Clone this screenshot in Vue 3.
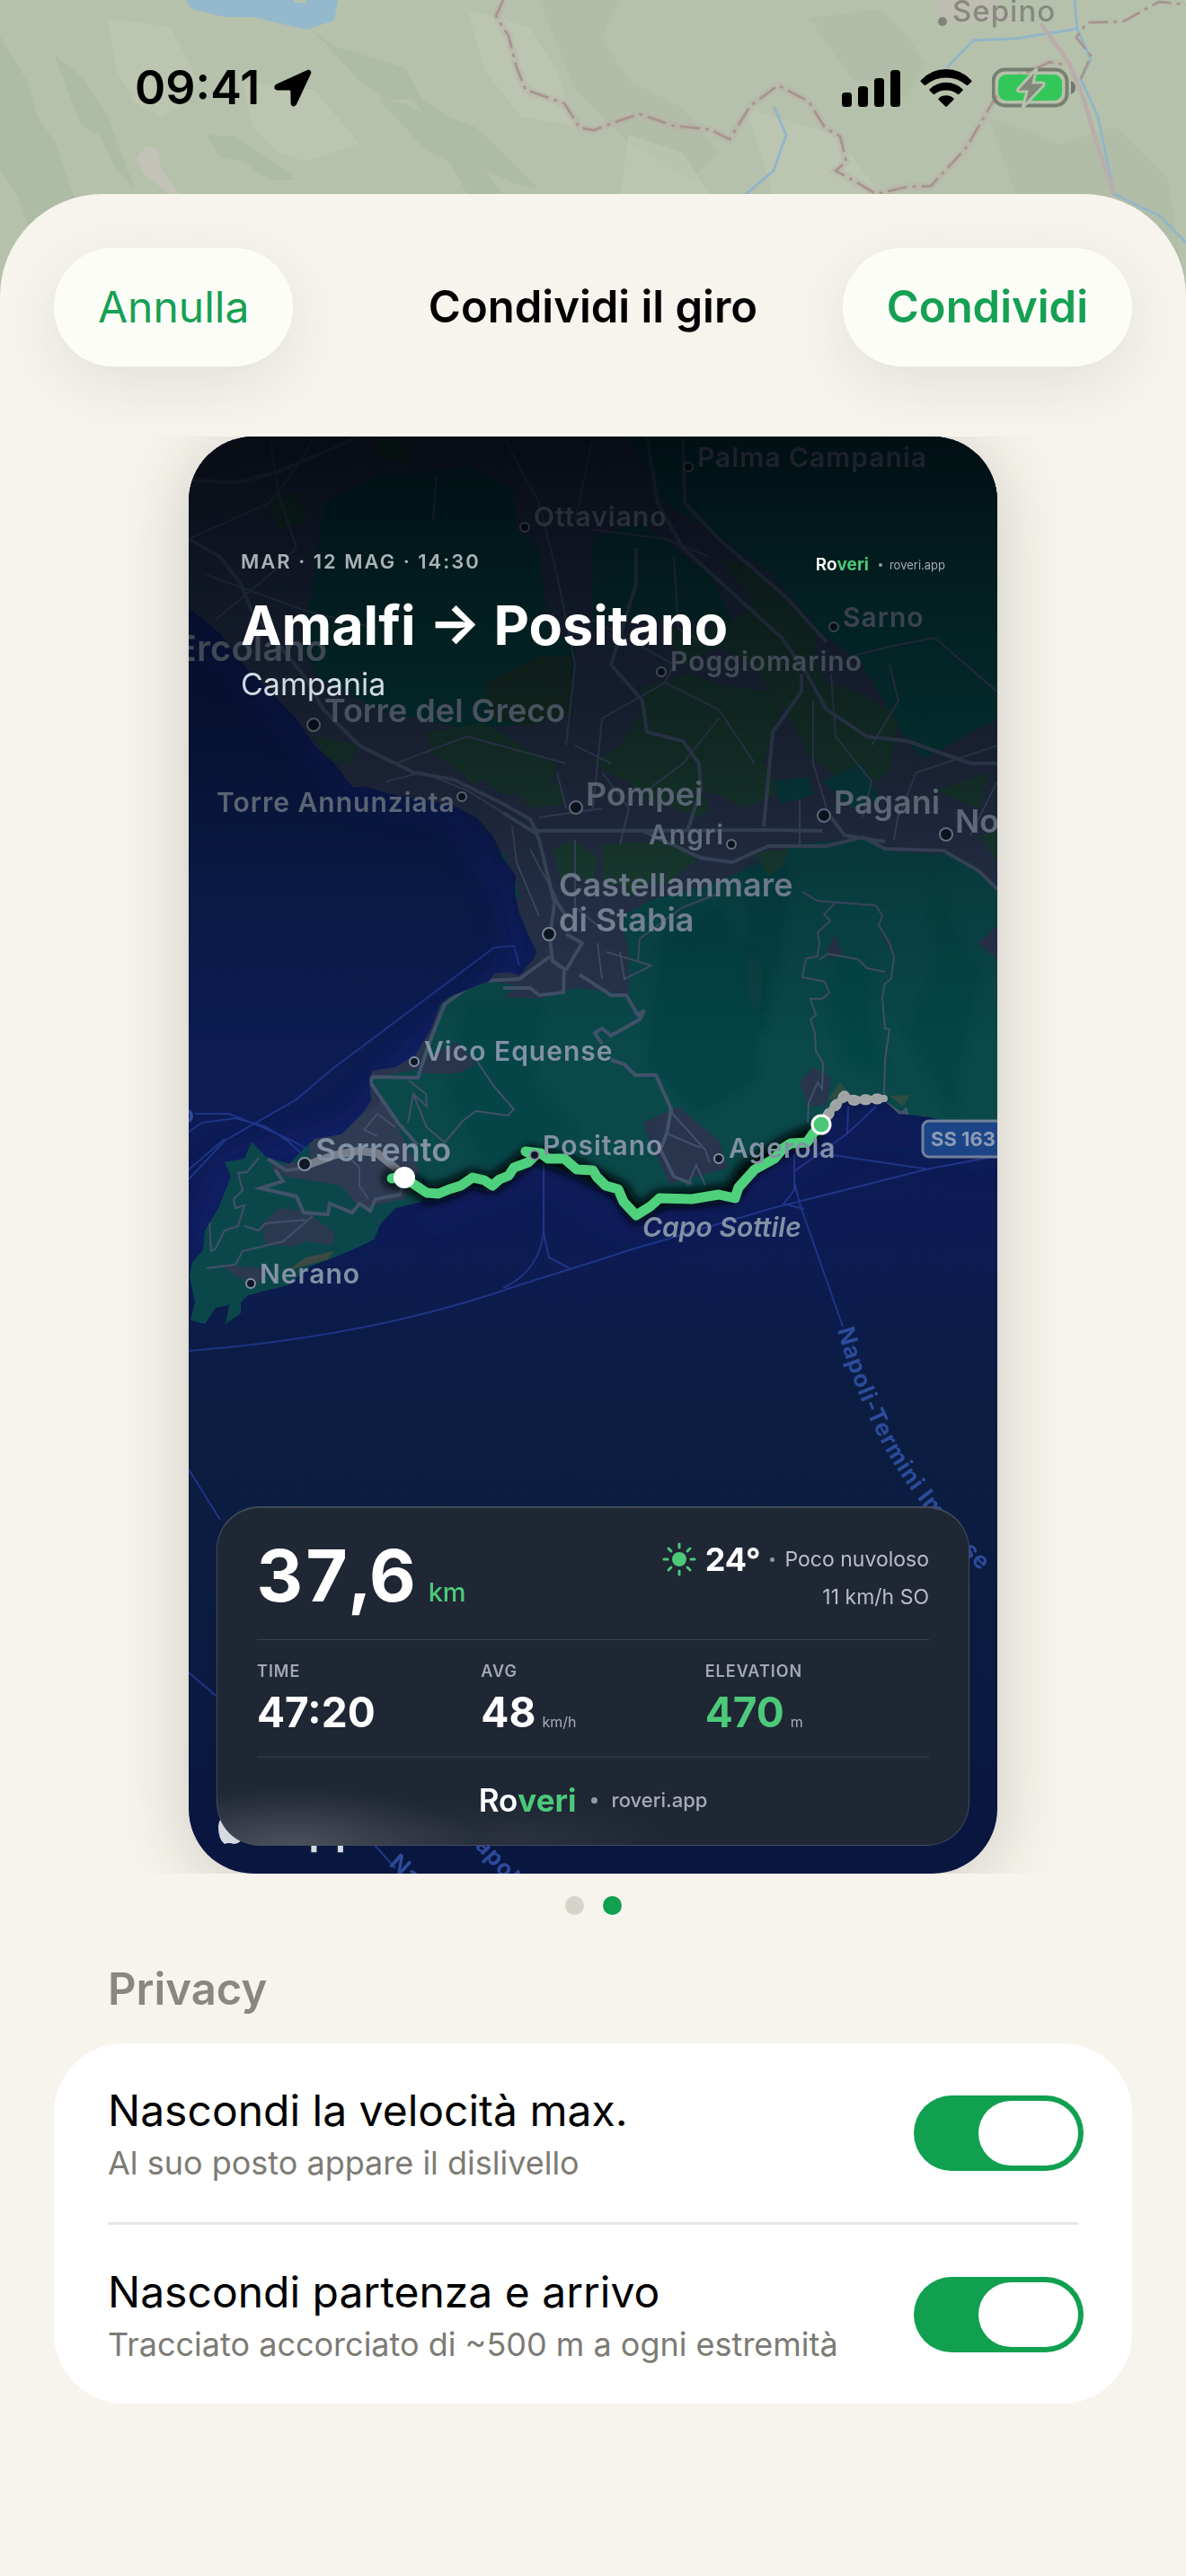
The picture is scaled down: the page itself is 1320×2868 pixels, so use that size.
<script setup>
import { reactive } from 'vue'

const privacy = reactive([
  { id: 'hide-speed', title: 'Nascondi la velocità max.', hint: 'Al suo posto appare il dislivello', on: true },
  { id: 'hide-ends', title: 'Nascondi partenza e arrivo', hint: 'Tracciato accorciato di ~500 m a ogni estremità', on: true },
])

const stats = [
  { label: 'TIME', value: '47:20', unit: '' },
  { label: 'AVG', value: '48', unit: 'km/h' },
  { label: 'ELEVATION', value: '470', unit: 'm', accent: true },
]

const towns = [
  { name: 'Palma Campania', x: 776, y: 520, dx: 766, dy: 520, size: 's' },
  { name: 'Ottaviano', x: 594, y: 586, dx: 584, dy: 587, size: 's' },
  { name: 'Sarno', x: 938, y: 698, dx: 928, dy: 698, size: 's' },
  { name: 'Poggiomarino', x: 746, y: 747, dx: 736, dy: 748, size: 's' },
  { name: 'Torre del Greco', x: 361, y: 804, dx: 349, dy: 807, size: 'm' },
  { name: 'Torre Annunziata', x: 241, y: 904, dx: 514, dy: 887, size: 's' },
  { name: 'Pompei', x: 652, y: 897, dx: 641, dy: 899, size: 'm' },
  { name: 'Pagani', x: 928, y: 906, dx: 917, dy: 908, size: 'm' },
  { name: 'No', x: 1063, y: 927, dx: 1053, dy: 929, size: 'm' },
  { name: 'Angri', x: 722, y: 940, dx: 814, dy: 940, size: 's' },
  { name: 'Castellammare', x: 622, y: 998, dx: 611, dy: 1040, size: 'm' },
  { name: 'di Stabia', x: 622, y: 1037, size: 'm' },
  { name: 'Vico Equense', x: 472, y: 1181, dx: 461, dy: 1182, size: 's' },
  { name: 'Positano', x: 604, y: 1286, size: 's' },
  { name: 'Agerola', x: 811, y: 1289, dx: 800, dy: 1290, size: 's' },
  { name: 'Nerano', x: 289, y: 1429, dx: 279, dy: 1429, size: 's' },
]
</script>

<template>
  <div class="screen">
    <svg class="backdrop" viewBox="0 0 1320 440" aria-hidden="true">
      <rect width="1320" height="440" fill="#b6c1ab" />
      <g fill="#a9b59f" opacity=".45">
        <path d="M0 40L30 90 42 130 62 160 90 240 110 330 80 400 50 300 20 220 0 190Z" />
        <path d="M60 60L90 85 120 130 135 170 150 210 130 190 110 150 90 140Z" />
        <path d="M345 30L372 52 400 60 450 75 470 110 500 130 530 142 560 170 600 210 575 205 540 190 510 160 480 140 460 110 430 112 400 90Z" />
        <path d="M230 150L260 152 290 170 330 200 300 200 270 180 245 175Z" />
        <path d="M420 110L450 115 480 130 510 155 540 190 560 216 520 216 500 180 470 165 450 140Z" />
        <path d="M600 0L690 0 670 40 700 90 760 120 800 170 770 200 700 160 640 100 620 50Z" opacity=".6" />
        <path d="M900 20L980 10 1010 40 1030 70 1010 110 980 90 950 90Z" opacity=".6" />
        <path d="M1100 130L1180 160 1240 140 1300 200 1320 330 1230 260 1130 216Z" opacity=".6" />
      </g>
      <g fill="#c0cab5" opacity=".5">
        <path d="M120 20L190 30 220 90 200 120 180 130 150 115 130 80Z" />
        <path d="M270 90L350 100 400 160 340 180 310 170 280 140Z" />
        <path d="M520 10L590 30 620 80 640 140 580 130 540 80Z" />
        <path d="M830 120L930 150 980 216 860 216Z" />
        <path d="M700 150L760 170 790 216 690 216Z" />
      </g>
      <path d="M207 0L213 10 250 19 281 19 341 33 372 23 376 0 340 0 341 3 328 3 327 0Z" fill="#95b9cc" />
      <path d="M152 175L163 163 175 165 180 190 207 226 190 216 160 195Z" fill="#c3c2b9" />
      <path d="M1046 0L1044 18 1060 26 1130 24 1110 0Z" fill="#bfbcb3" />
      <g fill="none" stroke="#92b5c8" stroke-width="3">
        <path d="M1196 0L1199 32 1130 43 1083 45 1054 75" />
        <path d="M1199 32L1214 66 1203 88 1222 130 1240 216 1290 240 1320 270" />
        <path d="M861 118L875 150 861 190 828 218" />
      </g>
      <path d="M1158 26L1190 70 1206 110 1224 170 1240 216" fill="none" stroke="#b9aeac" stroke-width="5" />
      <g fill="none">
        <path d="M560 0L552 18 566 40 575 75 585 100 628 115 645 142 661 145 690 134 712 127 750 140 790 144 812 155 835 118 866 95 900 113 918 142 935 152 942 180 930 190 952 202 975 216 1010 208 1036 207 1075 165 1103 117 1120 90 1150 78 1168 69 1185 72" stroke="#b9aca6" stroke-width="9" opacity=".35" />
        <path d="M560 0L552 18 566 40 575 75 585 100 628 115 645 142 661 145 690 134 712 127 750 140 790 144 812 155 835 118 866 95 900 113 918 142 935 152 942 180 930 190 952 202 975 216 1010 208 1036 207 1075 165 1103 117 1120 90 1150 78 1168 69 1185 72" stroke="#a8958f" stroke-width="3" stroke-dasharray="22 6 4 6" />
        <path d="M1203 88L1214 62 1198 42 1210 25 1250 24 1290 2 1320 5" stroke="#a8958f" stroke-width="3" stroke-dasharray="22 6 4 6" />
      </g>
      <circle cx="1049" cy="24" r="5" fill="#7f857a" />
      <text x="1060" y="24" class="sepino">Sepino</text>
    </svg>

    <header class="status">
      <div class="clock">
        <span>09:41</span>
        <svg width="42" height="42" viewBox="0 0 42 42" aria-hidden="true">
          <path d="M36.500 1.200L3 16.500C-1 18.500-.2 23.300 3.500 23.400L17.200 23.600Q18.400 23.600 18.400 24.800L18.600 38C18.700 42 23.300 42.800 25.200 38.800L40.800 5.500C42.300 2 39.800-.3 36.500 1.200Z" fill="#000" />
        </svg>
      </div>
      <div class="signals">
        <svg width="65" height="41" viewBox="0 0 65 41" aria-hidden="true">
          <rect x="0" y="25" width="11" height="16" rx="3.500" /><rect x="18" y="18" width="11" height="23" rx="3.500" />
          <rect x="36" y="9" width="11" height="32" rx="3.500" /><rect x="54" y="0" width="11" height="41" rx="3.500" />
        </svg>
        <svg width="58" height="42" viewBox="0 0 58 42" aria-hidden="true">
          <path d="M.8 12.400Q12.500 0 29 0T57.200 12.400Q57.800 13.200 57.200 13.900L53.300 17.800Q52.500 18.400 51.700 17.800Q42 9.400 29 9.400T6.300 17.800Q5.500 18.400 4.700 17.800L.8 13.900Q.2 13.200.8 12.400Z" />
          <path d="M10.600 22.300Q18.500 14.800 29 14.800T47.400 22.300Q48 23.100 47.400 23.800L43.400 27.800Q42.600 28.500 41.800 27.800Q36.300 23.400 29 23.400T16.200 27.800Q15.400 28.500 14.600 27.800L10.600 23.800Q10 23.100 10.600 22.300Z" />
          <path d="M20.600 32.400Q24 29.300 29 29.300T37.400 32.400Q38 33.200 37.400 33.900L29.800 41.400Q29 42.100 28.200 41.400L20.600 33.900Q20 33.200 20.600 32.400Z" />
        </svg>
        <svg width="94" height="46" viewBox="0 0 94 46" aria-hidden="true">
          <rect x="1.500" y="2.500" width="82" height="40" rx="13" fill="none" stroke="#767f70" stroke-width="4" />
          <path d="M88 15Q93 17 93 22.500T88 30Z" fill="#6f776a" />
          <rect x="7" y="8" width="71" height="29" rx="9" fill="#33c759" />
          <path d="M50 1L29 24Q27 27 31 27H39L34 45 57 21Q60 17 55 17H46Z" fill="#80887a" stroke="#b6c1ab" stroke-width="3" />
        </svg>
      </div>
    </header>

    <main class="sheet">
      <div class="toolbar">
        <button type="button" class="pill">Annulla</button>
        <h1>Condividi il giro</h1>
        <button type="button" class="pill strong">Condividi</button>
      </div>

      <div class="carousel">
        <article class="card">
          <svg class="map" viewBox="210 486 900 1600" preserveAspectRatio="xMidYMid slice" aria-hidden="true">
            <defs>
              <linearGradient id="sea" x1="0" y1="0" x2="0" y2="1">
                <stop offset="0" stop-color="#0e1f55" /><stop offset=".3" stop-color="#0c1e50" />
                <stop offset=".55" stop-color="#0d1b55" /><stop offset=".68" stop-color="#0b1d40" />
                <stop offset=".78" stop-color="#0b1c40" /><stop offset="1" stop-color="#091640" />
              </linearGradient>
              <linearGradient id="shade" x1="0" y1="0" x2="0" y2="1">
                <stop offset="0" stop-color="#000308" stop-opacity=".82" /><stop offset=".1" stop-color="#000308" stop-opacity=".6" />
                <stop offset=".22" stop-color="#000308" stop-opacity=".4" /><stop offset=".32" stop-color="#000308" stop-opacity=".15" />
                <stop offset=".42" stop-color="#000308" stop-opacity="0" />
              </linearGradient>
              <filter id="soft" x="-20%" y="-20%" width="140%" height="140%"><feGaussianBlur stdDeviation="14" /></filter>
              <filter id="glow" x="-10%" y="-50%" width="120%" height="200%"><feGaussianBlur stdDeviation="4" /></filter>
              <clipPath id="landclip">
                <path d="M210 486V677L245 705 275 745 330 800 350 830 372 850 393 877 405 875 430 883 505 897 530 910 548 930 560 955 574 975 573 990 577 1015 590 1045 597 1060 592 1070 578 1086 566 1082 550 1084 545 1092 500 1110 490 1118 480 1145 462 1175 440 1188 415 1192 411 1200 413 1225 405 1238 380 1263 350 1268 335 1282 322 1296 296 1288 280 1271 272 1290 250 1294 257 1310 243 1345 228 1370 226 1392 214 1405 211 1420 217 1450 212 1470 228 1474 240 1456 255 1453 251 1474 268 1462 268 1450 276 1442 320 1431 345 1410 372 1400 398 1389 416 1380 424 1362 440 1345 470 1338 490 1326 522 1312 550 1320 582 1290 602 1284 640 1300 665 1298 690 1325 708 1350 735 1335 770 1334 815 1328 830 1305 860 1282 880 1272 905 1262 925 1240 945 1224 985 1226 1000 1240 1030 1243 1110 1262V486Z" />
              </clipPath>
            </defs>
            <rect x="210" y="486" width="900" height="1600" fill="url(#sea)" />
            <g filter="url(#soft)" fill="none" stroke="#162174" stroke-width="26" opacity=".6">
              <path d="M210 690L330 815 390 880 505 905 560 985 580 1060 540 1110 480 1155 440 1200 390 1260 250 1300 215 1400" />
              <path d="M470 1360L600 1310 700 1375 850 1320 960 1255 1110 1290" opacity=".4" />
            </g>
            <g clip-path="url(#landclip)">
              <rect x="210" y="486" width="900" height="800" fill="#29344d" />
              <rect x="210" y="1260" width="260" height="230" fill="#0b474a" />
              <path d="M300 1300L345 1290 345 1270 420 1230 440 1190 480 1280 450 1335 400 1345 380 1320 320 1310Z" fill="#2f3b52" />
              <path d="M305 1345L345 1348 370 1385 365 1372 325 1385 290 1365 310 1345ZM245 1408L300 1412 285 1432 262 1420Z" fill="#2b3a50" />
              <path d="M345 1352L372 1372 370 1386 340 1382 325 1388 296 1386 292 1368 320 1362Z" fill="#2b3a50" />
              <path d="M318 1416L340 1400 372 1393 365 1402 330 1412Z" fill="#3b4a43" />
              <!-- mountains of the peninsula -->
              <path d="M500 1110L545 1092 590 1100 630 1105 640 1090 700 1110 700 1060 690 1020 730 1000 790 985 860 955 880 940 960 934 990 948 1060 952 1095 975 1110 985V1265H1030L985 1226 945 1222 905 1262 830 1300 815 1330 710 1352 665 1298 582 1290 550 1320 480 1330 440 1250 411 1200 470 1190 490 1120Z" fill="#0a484a" />
              <g filter="url(#glow)">
                <path d="M740 1030L800 1010 850 1080 840 1200 780 1240 720 1180Z" fill="#0a4144" opacity=".6" />
                <path d="M830 960L880 960 870 1060 850 1150 830 1100Z" fill="#093c40" opacity=".5" />
                <path d="M930 1060L970 1080 965 1140 990 1200 940 1180 925 1120Z" fill="#0a4245" opacity=".6" />
                <path d="M1040 980L1070 1050 1090 1080 1075 1150 1060 1240 1010 1150 1040 1090Z" fill="#0a4144" opacity=".5" />
                <path d="M520 1120L600 1120 590 1200 640 1260 540 1300 500 1220Z" fill="#0a4247" opacity=".5" />
              </g>
              <path d="M470 1180L510 1160 530 1185 510 1195 470 1195ZM715 1250L755 1232 800 1270 810 1300 745 1318ZM890 1205L905 1188 925 1200 920 1230 900 1232ZM560 1110L620 1070 690 1060 695 1105 640 1100 600 1112ZM920 1060L930 1040 938 1062 925 1068ZM980 1040L990 1045 992 1058ZM1088 1050L1110 1030V1068Z" fill="#29344d" />
              <path d="M920 1225L935 1205 950 1222ZM990 1220L1013 1219 1005 1232Z" fill="#2c4c44" />
              <!-- Vesuvius and the eastern hills -->
              <path d="M360 560L420 530 520 520 572 545 575 590 600 610 610 700 640 720 638 790 600 805 520 812 420 790 355 755 335 720 350 640Z" fill="#06403f" />
              <path d="M540 760L600 730 636 730 636 795 590 808 545 800Z" fill="#1c3a2e" />
              <path d="M700 486H1110V860L1060 890 1000 810 960 740 910 700 860 640 790 590 740 560Z" fill="#084745" />
              <path d="M660 600L710 580 790 640 820 700 760 690 690 690 660 700Z" fill="#08413f" />
              <path d="M1000 860L1110 800 1110 870 1050 900Z" fill="#29344d" />
              <!-- farmland -->
              <g fill="#1d4236">
                <path d="M800 620L850 640 880 672 910 700 905 730 920 760 965 775 1000 800 995 830 990 860 940 890 925 860 900 840 880 800 860 770 830 735 800 720 760 740 740 700 780 702 820 690 840 670Z" />
                <path d="M715 765L770 750 800 762 860 770 870 790 860 815 850 850 870 880 830 900 800 885 780 880 790 900 780 910 720 890 700 870 680 862 660 850 690 830 710 800Z" />
                <path d="M670 940L750 935 780 955 740 985 720 982 700 1000 690 985 670 985ZM840 950L880 945 870 965 855 975Z" />
                <path d="M475 815L540 805 580 830 620 850 610 880 560 885 540 870 520 860 480 840ZM350 820L400 830 390 850 365 845ZM500 850L540 860 530 875ZM575 880L620 870 630 895 590 900ZM615 945L640 935 665 955 660 985 640 972 625 985Z" />
                <path d="M300 560L330 545 340 580 310 590ZM420 486L460 495 450 515 415 505ZM1040 880L1100 860 1090 900ZM1090 930L1110 925V960Z" />
              </g>
              <path d="M550 950L560 948 580 1000 573 1000ZM860 870L900 865 905 885 870 895ZM915 870L960 850 980 890 950 900Z" fill="#0a474a" />
              <!-- minor roads -->
              <g fill="none" stroke="#43506a" stroke-width="2">
                <path d="M210 600L300 560 330 520 350 486M230 640L340 680 420 700M240 690L300 640 330 610 310 550 300 486M486 530L482 580M640 580L660 486M560 486L600 560 620 640 640 740 630 830" />
                <path d="M660 590L740 600 790 620M750 620L755 700 790 720M660 690L750 740 740 760 670 800 660 900M740 760L800 790 840 850M925 750L930 820 970 870 960 910M905 780L905 850 920 900M800 800L760 850 720 880" />
                <path d="M1110 770L1040 710 990 720 950 730M970 830L1000 780 990 740M1000 910L1020 860 1110 830M1080 930L1110 870M670 860L700 900 690 940M890 890L890 940M1000 905L995 935" />
                <path d="M430 870L470 860 520 880 560 905M440 850L520 820 630 850M620 860L630 900M600 910L670 900M640 830L680 850M570 920L575 960 600 1020M590 945L600 965 620 1000M640 935L640 1010 665 1030" />
                <path d="M675 1060L725 1075 695 1090 690 1060M665 1050L670 1090M710 1070L712 1045 760 1010 800 995" />
                <path d="M893 993L910 1003 975 1008 982 1020 978 1030 990 1050 995 1065 992 1090 985 1095 982 1110 985 1145 990 1146 985 1180 984 1220M930 1005L917 1018 924 1025 910 1038 912 1050 910 1065 897 1067 893 1088 918 1093 923 1105 915 1112 902 1112 908 1130 902 1135 907 1150 908 1170 916 1183 915 1212 910 1205 900 1228 899 1250M912 1068L922 1062 955 1068 965 1078 985 1082" />
                <path d="M530 1180L550 1210 572 1235 565 1242 530 1237 515 1248 495 1272 475 1255 460 1218 454 1250M455 1203L474 1218 475 1232 460 1218M440 1255L420 1240 405 1258 420 1265" />
                <path d="M288 1289L275 1305 265 1306 270 1325 260 1335 262 1345 272 1342 265 1365 250 1370 240 1390 235 1393 233 1358M272 1365L288 1370 295 1362 340 1358M348 1354L315 1382 270 1393 262 1408 230 1412M410 1335L400 1320 400 1300 385 1285" />
                <path d="M744 1235L785 1280 790 1295M742 1262L780 1278M765 1320L775 1297 785 1320" />
              </g>
              <!-- main roads -->
              <g fill="none" stroke="#43526b" stroke-width="4">
                <path d="M210 600L245 620 268 650 280 680 340 755 360 790 400 830 460 860 505 868 560 895 590 912 597 925 715 925 850 924 915 925" />
                <path d="M210 535L265 537 310 525 400 486M590 912L600 935 617 1005 612 1045 615 1070 630 1080M560 905L600 930M617 1000L630 1020" />
                <path d="M720 486L732 560 760 610 870 710 895 745 920 790 965 820 1010 825 1080 850 1110 850M760 486L762 560 800 600 875 665 920 715M708 610L708 650 680 740 715 780 720 815 760 825 778 850 780 880 765 925M892 750L892 770 860 815 850 920" />
                <path d="M715 925L780 955 815 960 855 942 920 942 960 932 985 945 1050 947 1090 970 1110 990M925 910L940 930 985 937" />
                <path d="M630 1080L648 1050 630 1040M540 1092L578 1090 612 1065M560 1100L590 1100 600 1108 627 1105 628 1078M540 1092L520 1100 495 1118 480 1155 470 1185 465 1200 415 1199 412 1205 443 1250 465 1275" />
                <path d="M645 1085L680 1108 697 1108 710 1130 717 1125 712 1135 680 1153 670 1145 662 1150 670 1162M680 1180L695 1185 707 1197 730 1197 747 1235 742 1262 735 1280 750 1310 770 1318" />
                <path d="M298 1290L318 1303 345 1300M306 1302L315 1315 290 1323 330 1332 338 1350 365 1352 367 1340 392 1350 400 1340 412 1348 418 1335 445 1330 448 1320" />
                <path d="M985 1228L1003 1240 1008 1236 1010 1244 1030 1244" />
              </g>
            </g>
            <!-- ferry lines -->
            <g fill="none" stroke="#1f3587" stroke-width="2">
              <path d="M217 1240L255 1240 290 1254 325 1270 343 1280M210 1260L225 1250 262 1245 295 1254 320 1270 335 1284M210 1313L250 1270 330 1224 370 1190 550 1055 572 1053 578 1075M210 1302L250 1268" />
              <path d="M210 1504Q420 1487 580 1430L660 1405 700 1392 860 1345 1035 1301 1110 1287" />
              <path d="M605 1296V1372Q600 1415 560 1434M605 1372L611 1400 634 1412" />
              <path d="M884 1285V1325L870 1343M884 1316L890 1340 938 1477M944 1232L943 1262 884 1304M975 1232L943 1262M927 1286L1035 1302M875 1341L895 1346" />
              <path d="M210 1636L245 1692M210 1862L245 1892M415 2052L440 2080" />
            </g>
            <text class="sealabel" text-anchor="end" x="217" y="1250">o</text>
            <path id="ferry" d="M932 1480Q962 1592 1024 1672T1140 1792" fill="none" />
            <text class="sealabel"><textPath href="#ferry">Napoli-Termini Imerese</textPath></text>
            <text class="sealabel" transform="translate(432 2076) rotate(42)">Napoli</text>
            <text class="sealabel" transform="translate(514 2040) rotate(48)">Napoli</text>
            <path d="M345 1296L372 1286 400 1281 420 1284 442 1302" fill="none" stroke="#8b8f98" stroke-width="9" stroke-linecap="round" opacity=".8" />
            <path d="M914 1252L926 1235 940 1220 950 1225 984 1223" fill="none" stroke="#a8aaab" stroke-width="12" stroke-linecap="round" stroke-linejoin="round" stroke-dasharray="2 11" />
            <path d="M914 1252L926 1235 940 1220 950 1225 984 1223" fill="none" stroke="#9fa3a4" stroke-width="8" stroke-linecap="round" stroke-linejoin="round" />
            <g fill="none" stroke-linecap="round" stroke-linejoin="round">
              <path filter="url(#glow)" stroke="#02090f" stroke-width="20" d="M436 1312L455 1316 478 1330 500 1324 525 1312 548 1318 570 1302 590 1286 610 1289 640 1300 665 1312 690 1325 708 1352 735 1335 770 1334 815 1328 830 1303 860 1284 880 1272 905 1262" />
              <path stroke="#4fd07d" stroke-width="11" d="M436 1312L448 1310 463 1320 475 1328 488 1329 500 1324 513 1320 526 1311 539 1314 548 1320 556 1313 566 1309 572 1300 588 1294 596 1286 585 1282 602 1284 610 1290 628 1290 642 1302 660 1303 664 1310 674 1320 688 1324 694 1338 708 1353 724 1343 734 1334 770 1335 800 1330 818 1334 822 1322 840 1302 862 1290 872 1278 880 1273 898 1272 905 1262 914 1252" />
            </g>
            <g fill="#101826" stroke="#8390a3" stroke-width="2">
              <circle v-for="t in towns.filter((t) => t.dx)" :key="t.name" :cx="t.dx" :cy="t.dy" :r="t.size === 'm' ? 7 : 5" />
              <circle cx="339" cy="1296" r="7" /><circle cx="595" cy="1286" r="5" />
            </g>
            <g class="towns">
              <text v-for="t in towns" :key="t.name" :x="t.x" :y="t.y" :class="t.size">{{ t.name }}</text>
              <text x="364" y="736" text-anchor="end" class="l">Ercolano</text>
              <text x="351" y="1293" class="m">Sorrento</text>
              <text x="715" y="1377" class="s cape">Capo Sottile</text>
            </g>
            <circle cx="450" cy="1311" r="12" fill="#fff" />
            <circle cx="914" cy="1252" r="10" fill="#49c677" stroke="#fff" stroke-width="3" />
            <rect x="1027" y="1248" width="110" height="40" rx="7" fill="#1c4588" stroke="#74819a" stroke-width="3" />
            <text x="1036" y="1276" class="road">SS 163</text>
            <g fill="#d8dae2">
              <path d="M257 2018Q270 2010 272 2030Q274 2052 260 2053Q255 2051 250 2053Q243 2048 243 2034Q244 2020 257 2018Z" />
              <text x="273" y="2053" class="logo">Mappe</text>
            </g>
            <rect x="210" y="486" width="900" height="1600" fill="url(#shade)" />
          </svg>

          <div class="overlay">
            <header class="ride">
              <div>
                <p class="date">MAR · 12 MAG · 14:30</p>
                <h2>Amalfi → Positano</h2>
                <p class="region">Campania</p>
              </div>
              <p class="brand small"><b>Ro<i>veri</i></b><span class="dot"></span><span>roveri.app</span></p>
            </header>

            <section class="panel">
              <div class="hero">
                <p class="distance">37,6<small>km</small></p>
                <div class="weather">
                  <p>
                    <svg width="38" height="38" viewBox="0 0 38 38" aria-hidden="true">
                      <circle cx="19" cy="19" r="8" fill="#4cc979" />
                      <path d="M19 2V6M19 32V36M2 19H6M32 19H36M7 7L10 10M28 28L31 31M31 7L28 10M10 28L7 31" stroke="#4cc979" stroke-width="3" stroke-linecap="round" />
                    </svg>
                    <strong>24°</strong><span class="dot"></span><span>Poco nuvoloso</span>
                  </p>
                  <p>11 km/h SO</p>
                </div>
              </div>
              <dl class="stats">
                <div v-for="s in stats" :key="s.label" :class="{ accent: s.accent }">
                  <dt>{{ s.label }}</dt>
                  <dd>{{ s.value }}<small v-if="s.unit">{{ s.unit }}</small></dd>
                </div>
              </dl>
              <p class="brand large"><b>Ro<i>veri</i></b><span class="dot"></span><span>roveri.app</span></p>
            </section>
          </div>
        </article>
      </div>

      <div class="pager"><span></span><span class="current"></span></div>

      <section class="privacy">
        <h2>Privacy</h2>
        <div class="group">
          <template v-for="(p, i) in privacy" :key="p.id">
            <hr v-if="i > 0">
            <label class="row" :for="p.id">
              <span class="texts"><span class="name">{{ p.title }}</span><span class="hint">{{ p.hint }}</span></span>
              <input :id="p.id" v-model="p.on" type="checkbox" role="switch">
            </label>
          </template>
        </div>
      </section>
    </main>
  </div>
</template>

<style>
body { background: #f7f4ed; }
</style>

<style scoped>
* { box-sizing: border-box; margin: 0; padding: 0; }
.screen { position: relative; display: flex; flex-direction: column; min-height: 100vh; font-family: Inter, "Liberation Sans", sans-serif; color: #000; }
.backdrop { position: absolute; top: 0; left: 0; width: 100%; }
.sepino { font-size: 33px; font-weight: 500; letter-spacing: 1px; fill: #858a7e; }

.status { position: relative; display: flex; justify-content: space-between; align-items: center; height: 216px; padding: 0 122px 20px 150px; }
.clock { display: flex; align-items: center; gap: 16px; font-size: 52px; font-weight: 600; line-height: 60px; }
.signals { display: flex; align-items: center; gap: 22px; }

.sheet { position: relative; flex: 1; background: #f7f4ed; border-radius: 114px 114px 0 0; }
.toolbar { display: grid; grid-template-columns: 1fr auto 1fr; align-items: center; padding: 60px 60px 78px; }
.toolbar h1 { font-size: 49px; font-weight: 600; line-height: 60px; }
.pill { justify-self: start; height: 132px; padding: 0 49px; border: 0; border-radius: 66px; background: #fdfdf8; box-shadow: 0 20px 70px rgba(60, 60, 70, .1); font: 400 48px/60px Inter, "Liberation Sans", sans-serif; color: #16a053; }
.pill.strong { justify-self: end; font-size: 49px; font-weight: 600; }

.carousel { display: flex; justify-content: center; overflow: hidden; }
.card { position: relative; width: 75%; max-width: 900px; aspect-ratio: 9 / 16; border-radius: 72px; box-shadow: 0 10px 80px rgba(70, 65, 50, .24); overflow: hidden; }
.map { position: absolute; inset: 0; width: 100%; height: 100%; }
.towns text { fill: #8391a5; font-weight: 600; }
.towns .s { font-size: 30px; letter-spacing: 1px; }
.towns .m { font-size: 36px; }
.towns .l { font-size: 40px; }
.towns .cape { font-style: italic; letter-spacing: 0; }
.sealabel { font-size: 26px; font-weight: 700; letter-spacing: 1px; fill: #2c4b9a; }
.road { font-size: 22px; font-weight: 700; fill: #8c9bb4; }
.logo { font-size: 47px; font-weight: 600; }

.overlay { position: relative; display: flex; flex-direction: column; justify-content: space-between; height: 100%; padding: 125px 31px 31px; }
.ride { display: flex; justify-content: space-between; align-items: flex-start; padding: 0 27px; }
.date { font-size: 22px; line-height: 28px; font-weight: 600; letter-spacing: 2px; color: #a9b2b6; }
.ride h2 { margin-top: 21px; font-size: 61px; line-height: 72px; font-weight: 700; color: #fff; white-space: nowrap; }
.region { margin-top: 8px; font-size: 34px; line-height: 44px; color: #d2dae2; }

.brand { display: flex; align-items: center; }
.brand b { font-weight: 600; color: #fff; }
.brand i { font-style: normal; font-weight: 700; color: #4cc979; }
.dot { border-radius: 50%; background: #9499a3; }
.brand.small { font-size: 13px; line-height: 36px; color: #a3abb0; }
.brand.small b { font-size: 19px; }
.brand.small .dot { width: 4px; height: 4px; margin: 0 8px 0 11px; }
.brand.large { justify-content: center; padding: 23px 0 26px; font-size: 22px; line-height: 48px; color: #a8acb7; font-weight: 500; }
.brand.large b { font-size: 35px; }
.brand.large .dot { width: 7px; height: 7px; margin: 0 16px; }

.panel { padding: 36px 44px 0; border: 1px solid #424b5c; border-top-width: 2px; border-radius: 48px; background: radial-gradient(ellipse 210px 64px at 84px 100%, rgba(255, 255, 255, .2), rgba(255, 255, 255, 0)), radial-gradient(ellipse 170px 50px at 330px 100%, rgba(255, 255, 255, .06), rgba(255, 255, 255, 0)), #1f2634; }
.hero { display: flex; justify-content: space-between; align-items: flex-start; padding-bottom: 26px; border-bottom: 1px solid #3b4250; }
.distance { font-size: 80px; line-height: 78px; font-weight: 700; font-variant-numeric: tabular-nums; color: #fff; }
.distance small { margin-left: 14px; font-size: 29px; line-height: 29px; font-weight: 500; color: #4cc979; }
.weather { font-size: 23px; line-height: 42px; color: #b9bdc9; text-align: right; }
.weather p { display: flex; align-items: center; justify-content: flex-end; }
.weather strong { margin-left: 10px; font-size: 36px; font-weight: 700; color: #fff; }
.weather .dot { width: 5px; height: 5px; margin: 0 11px; }
.stats { display: grid; grid-template-columns: repeat(3, 1fr); padding: 23px 0; border-bottom: 2px solid #2f3644; }
.stats dt { font-size: 18px; line-height: 24px; font-weight: 600; letter-spacing: 1px; color: #a3a8b5; }
.stats dd { margin-top: 7px; font-size: 46px; line-height: 52px; font-weight: 700; color: #fff; }
.stats .accent dd { color: #4cc979; }
.stats small { margin-left: 7px; font-size: 16px; line-height: 16px; font-weight: 400; color: #a8acb7; }

.pager { display: flex; justify-content: center; gap: 21px; padding: 25px 0 53px; }
.pager span { width: 21px; height: 21px; border-radius: 50%; background: #d6d3ca; }
.pager .current { background: #11a04f; }

.privacy { padding: 0 60px; }
.privacy h2 { padding: 0 60px; margin-bottom: 30px; font-size: 49px; line-height: 60px; font-weight: 600; color: #888782; }
.group { border-radius: 78px; background: #fff; }
.group hr { height: 3px; margin: 0 60px; border: 0; background: #e6e6e4; }
.row { display: flex; align-items: center; justify-content: space-between; min-height: 199px; padding: 0 54px 0 60px; }
.texts { display: flex; flex-direction: column; gap: 6px; }
.name { font-size: 48px; line-height: 60px; }
.hint { font-size: 36px; line-height: 44px; color: #7c7b74; }
.row input { appearance: none; flex: none; display: flex; justify-content: flex-start; width: 189px; height: 84px; padding: 6px; border-radius: 42px; background: #d6d3ca; }
.row input::before { content: ""; width: 111px; height: 72px; border-radius: 36px; background: #fff; }
.row input:checked { justify-content: flex-end; background: #11a04f; }
</style>
